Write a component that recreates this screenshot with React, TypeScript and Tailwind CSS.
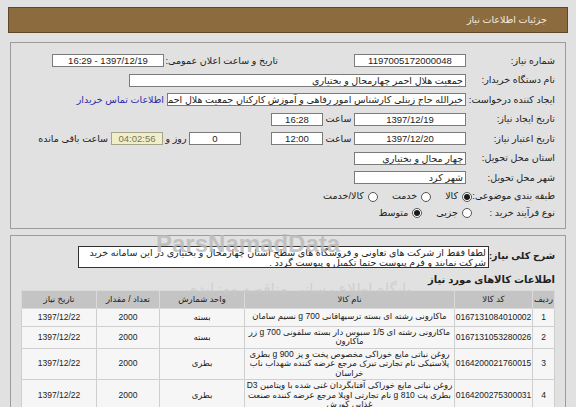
import React from 'react'

const font = "font-['Liberation_Sans','DejaVu_Sans',sans-serif]"

function Box({ w, children, align = 'center', className = '' }: { w: string; children?: React.ReactNode; align?: 'center' | 'right'; className?: string }) {
  return (
    <div
      className={`${w} h-[13px] shrink-0 bg-white border border-[#7b7b7b] leading-[11px] overflow-hidden whitespace-nowrap ${align === 'center' ? 'text-center' : 'text-right pr-[2px]'} ${className}`}
    >
      {children}
    </div>
  )
}

function Radio({ checked }: { checked?: boolean }) {
  return (
    <span className="w-[10px] h-[10px] shrink-0 rounded-full border border-[#555] bg-white flex items-center justify-center">
      {checked && <span className="w-[6px] h-[6px] rounded-full bg-[#1a1a1a]" />}
    </span>
  )
}

function Row({ label, h = 'h-[19.5px]', children }: { label: string; h?: string; children?: React.ReactNode }) {
  return (
    <div className={`flex items-center ${h}`}>
      <div className="w-[89px] shrink-0 whitespace-nowrap">{label}</div>
      {children}
    </div>
  )
}

const items = [
  {
    n: '1',
    code: '0167131084010002',
    name: ['ماکارونی رشته ای بسته ترسیهافانی 700 g نسیم سامان'],
    unit: 'بسته',
  },
  {
    n: '2',
    code: '0167131053280026',
    name: ['ماکارونی رشته ای 1/5 سبوس دار بسته سلفونی 700 g زر', 'ماکارون'],
    unit: 'بسته',
  },
  {
    n: '3',
    code: '0164200021760015',
    name: ['روغن نباتی مایع خوراکی مخصوص پخت و پز 900 g بطری', 'پلاستیکی نام تجارتی تبرک مرجع عرضه کننده شهداب ناب', 'خراسان'],
    unit: 'بطری',
  },
  {
    n: '4',
    code: '0164200275300031',
    name: ['روغن نباتی مایع خوراکی آفتابگردان غنی شده با ویتامین D3', 'بطری پت 810 g نام تجارتی اویلا مرجع عرضه کننده صنعت', 'غذایی کورش'],
    unit: 'بطری',
  },
]

export default function App() {
  return (
    <div dir="rtl" className={`relative w-[576px] h-[407px] overflow-hidden bg-[#e1e1e1] text-[9.5px] text-[#222] ${font}`}>
      {/* header */}
      <div className="mx-[8px] mt-[7px] h-[26px] bg-[#8c6c3e] border border-[#5e4828] flex items-center pr-[20px] text-[#f4ede0]">
        جزئیات اطلاعات نیاز
      </div>

      {/* main info */}
      <div className="mx-[10px] mt-[9px] border border-[#9c9c9c] pt-[8px] pb-[7px] pr-[10px]">
        <Row label="شماره نیاز:">
          <Box w="w-[112px]">1197005172000048</Box>
          <div className="w-[114px] ms-[76px] shrink-0 whitespace-nowrap">تاریخ و ساعت اعلان عمومی:</div>
          <Box w="w-[112px]">1397/12/19 - 16:29</Box>
        </Row>
        <Row label="نام دستگاه خریدار:">
          <Box w="w-[337px]" align="right">جمعیت هلال احمر چهارمحال و بختیاری</Box>
        </Row>
        <Row label="ایجاد کننده درخواست:">
          <Box w="w-[299px]" align="right">خیرالله حاج زینلی کارشناس امور رفاهی و آموزش کارکنان جمعیت هلال احمر چهارمحال و بختیاری</Box>
          <span className="ms-[3px] whitespace-nowrap text-[#2b2ba8]">اطلاعات تماس خریدار</span>
        </Row>
        <Row label="تاریخ ایجاد نیاز:">
          <Box w="w-[112px]">1397/12/19</Box>
          <div className="w-[31px] shrink-0 text-center">ساعت</div>
          <Box w="w-[52px]">16:28</Box>
        </Row>
        <Row label="تاریخ اعتبار نیاز:">
          <Box w="w-[112px]">1397/12/20</Box>
          <div className="w-[31px] shrink-0 text-center">ساعت</div>
          <Box w="w-[52px]">12:00</Box>
          <div className="w-[30px] shrink-0" />
          <Box w="w-[52px]">0</Box>
          <div className="w-[26px] shrink-0 text-center whitespace-nowrap">روز و</div>
          <Box w="w-[52px]" className="!bg-[#f1efc9] !border-[#a5a38a] text-[#77765c]">04:02:56</Box>
          <span className="ms-[3px] whitespace-nowrap">ساعت باقی مانده</span>
        </Row>
        <Row label="استان محل تحویل:">
          <Box w="w-[112px]" align="right">چهار محال و بختیاری</Box>
        </Row>
        <Row label="شهر محل تحویل:">
          <Box w="w-[112px]" align="right">شهر کرد</Box>
        </Row>
        <Row label="طبقه بندی موضوعی:" h="h-[18px]">
          <div className="flex items-center gap-[14px] ms-[-6px]">
            <span className="flex items-center gap-[4px]"><Radio checked />کالا</span>
            <span className="flex items-center gap-[4px]"><Radio />خدمت</span>
            <span className="flex items-center gap-[4px]"><Radio />کالا/خدمت</span>
          </div>
        </Row>
        <Row label="نوع فرآیند خرید :" h="h-[15px]">
          <div className="flex items-center gap-[14px] ms-[-6px]">
            <span className="flex items-center gap-[4px]"><Radio />جزیی</span>
            <span className="flex items-center gap-[4px]"><Radio checked />متوسط</span>
          </div>
        </Row>
      </div>

      {/* description + items */}
      <div className="mx-[10px] mt-[6px] border border-[#9c9c9c] pt-[10px] pr-[10px] h-[200px]">
        <div className="flex items-center">
          <div className="w-[66px] shrink-0 font-bold text-[9.5px] whitespace-nowrap">شرح کلی نیاز:</div>
          <div className="w-[411px] h-[22px] bg-white border border-[#333] pr-[2px] pt-[1px] leading-[10px] whitespace-nowrap overflow-hidden">
            <div>لطفا فقط از شرکت های تعاونی و فروشگاه های سطح استان چهارمحال و بختیاری در این سامانه خرید</div>
            <div>شرکت نمایند و فرم پیوست حتما تکمیل و پیوست گردد .</div>
          </div>
        </div>
        <div className="mt-[6px] font-bold text-[10px] leading-[12px]">اطلاعات کالاهای مورد نیاز</div>
        <table className="mt-[4px] w-[533px] border-collapse table-fixed text-[8.5px]">
          <colgroup>
            <col className="w-[22px]" />
            <col className="w-[78px]" />
            <col className="w-[210px]" />
            <col className="w-[85px]" />
            <col className="w-[63px]" />
            <col className="w-[75px]" />
          </colgroup>
          <thead>
            <tr className="h-[18px] bg-[#c4c4c4]">
              {['ردیف', 'کد کالا', 'نام کالا', 'واحد شمارش', 'تعداد / مقدار', 'تاریخ نیاز'].map((t, i) => (
                <th key={t} className={`border border-[#dadada] font-normal whitespace-nowrap ${i === 0 ? 'text-right pr-[1px]' : 'text-center'}`}>
                  {t}
                </th>
              ))}
            </tr>
          </thead>
          <tbody>
            {items.map((it) => (
              <tr key={it.n} className="bg-[#f6f6f6]">
                <td className="border border-[#cfcfcf] text-center h-[18px]">{it.n}</td>
                <td className="border border-[#cfcfcf] text-center">{it.code}</td>
                <td className="border border-[#cfcfcf] text-center leading-[9.5px] py-[1px]">
                  {it.name.map((l) => (
                    <div key={l} className="whitespace-nowrap">{l}</div>
                  ))}
                </td>
                <td className="border border-[#cfcfcf] text-center">{it.unit}</td>
                <td className="border border-[#cfcfcf] text-center">2000</td>
                <td className="border border-[#cfcfcf] text-center">1397/12/22</td>
              </tr>
            ))}
          </tbody>
        </table>
      </div>

      {/* watermark */}
      <div className="pointer-events-none absolute left-[156px] top-[226px] text-[24px] font-bold text-[#b9b9b9] opacity-80 font-['Liberation_Sans',sans-serif]" dir="ltr">
        ParsNamadData
      </div>
      <div className="pointer-events-none absolute left-[190px] top-[278px] text-[15px] text-[#c9c9c9] opacity-70 font-['DejaVu_Sans',sans-serif] whitespace-nowrap">
        پایگاه اطلاع رسانی مناقصه ومزایده
      </div>
    </div>
  )
}
